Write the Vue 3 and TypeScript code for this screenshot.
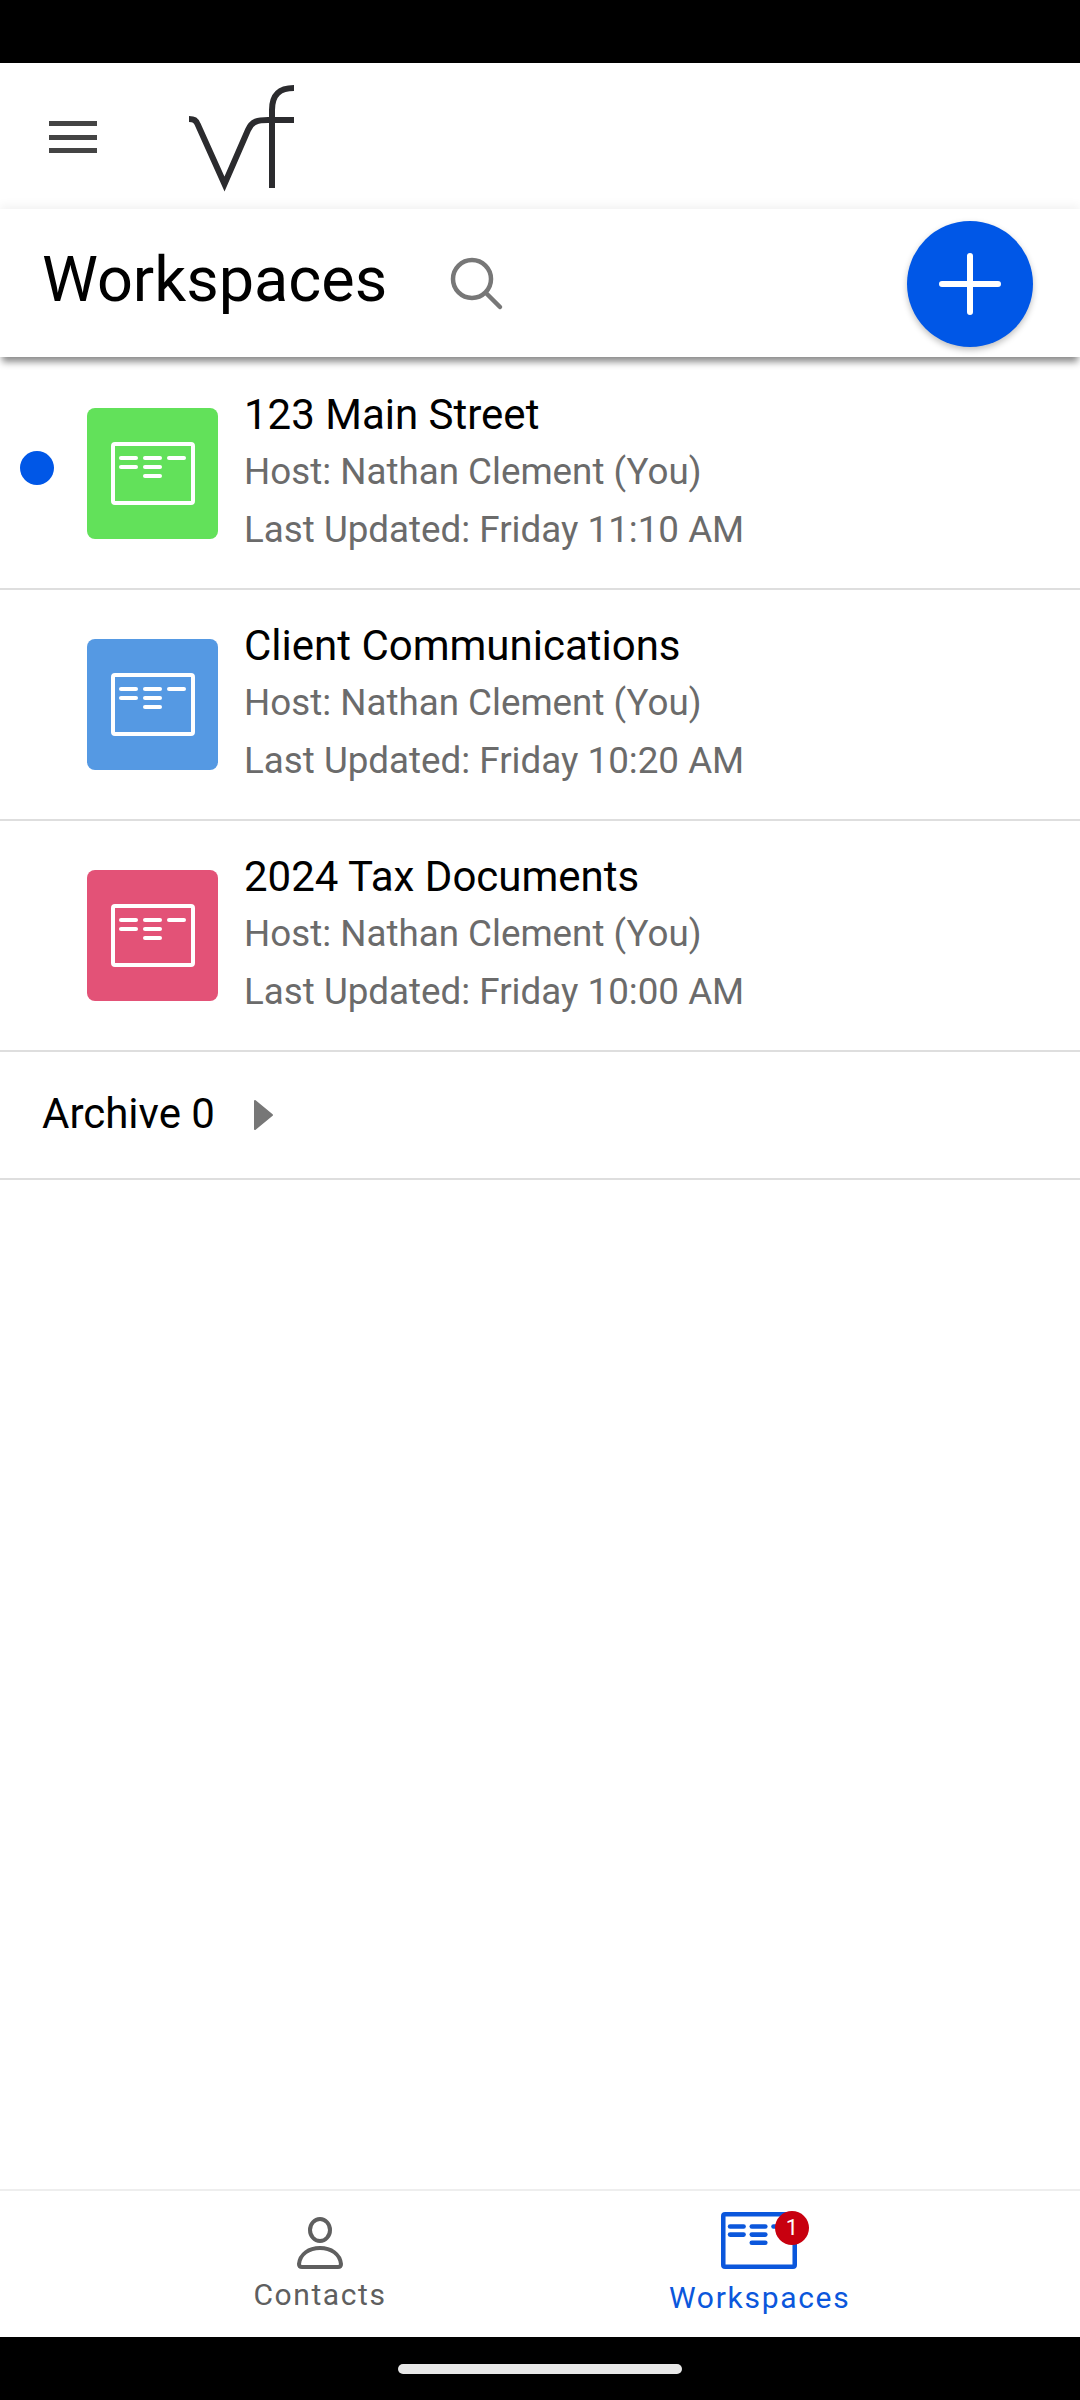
<script setup lang="ts">
interface Workspace {
  name: string
  updated: string
  color: string
  unread: boolean
}

const workspaces: Workspace[] = [
  { name: '123 Main Street', updated: 'Friday 11:10 AM', color: '#62e15a', unread: true },
  { name: 'Client Communications', updated: 'Friday 10:20 AM', color: '#5599e3', unread: false },
  { name: '2024 Tax Documents', updated: 'Friday 10:00 AM', color: '#e35277', unread: false },
]

const cardLines = [
  [10, 16, 25],
  [34, 16, 49],
  [58, 16, 73],
  [10, 25, 25],
  [34, 25, 49],
  [34, 34, 49],
]
</script>

<template>
  <div class="screen">
    <div class="status-bar"></div>

    <header class="top-bar">
      <div class="menu-icon">
        <span></span>
        <span></span>
        <span></span>
      </div>
      <svg class="logo" width="108" height="108" viewBox="0 0 108 108" fill="none" stroke="#2b2b2e" stroke-width="6">
        <path d="M1 35 C6 35 8 36 10 41 L36.5 100 L60 46 C64 37 70 36 80 36 L106 36" />
        <path d="M84 104 V26 C84 10 92 4 106 4" />
      </svg>
    </header>

    <section class="title-bar">
      <h1 class="page-title">Workspaces</h1>
      <svg class="search-icon" width="54" height="54" viewBox="0 0 54 54" fill="none" stroke="#777" stroke-width="4.5" stroke-linecap="round">
        <circle cx="22" cy="22" r="19" />
        <path d="M36 36 L50 50" />
      </svg>
      <button class="fab" type="button" aria-label="Add workspace">
        <svg width="62" height="62" viewBox="0 0 62 62" stroke="#fff" stroke-width="6" stroke-linecap="round">
          <path d="M31 3 V59 M3 31 H59" />
        </svg>
      </button>
    </section>

    <main class="content">
      <article v-for="item in workspaces" :key="item.name" class="row">
        <div class="dot-slot">
          <span v-if="item.unread" class="dot"></span>
        </div>
        <div class="tile" :style="{ background: item.color }">
          <svg width="84" height="63" viewBox="0 0 84 63" fill="none" stroke="#fff" stroke-width="4" stroke-linecap="round">
            <rect x="2" y="2" width="80" height="59" rx="2" />
            <path v-for="(l, i) in cardLines" :key="i" :d="`M${l[0]} ${l[1]} H${l[2]}`" />
          </svg>
        </div>
        <div class="info">
          <div class="name">{{ item.name }}</div>
          <div class="meta">Host: Nathan Clement (You)</div>
          <div class="meta">Last Updated: {{ item.updated }}</div>
        </div>
      </article>

      <div class="archive">
        <span>Archive 0</span>
        <svg class="caret" width="21" height="32" viewBox="0 0 21 32">
          <path d="M2 2 L19 16 L2 30 Z" fill="#777" stroke="#777" stroke-width="2" stroke-linejoin="round" />
        </svg>
      </div>
    </main>

    <footer class="tabs">
      <div class="tab">
        <div class="tab-icon">
          <svg width="50" height="54" viewBox="0 0 50 54" fill="none" stroke="#5f5f5f" stroke-width="4" stroke-linejoin="round">
            <ellipse cx="25" cy="14" rx="10" ry="11" />
            <path d="M4 48 C5 38 14 32 25 32 C36 32 45 38 46 48 C46 50 45 51 43 51 H7 C5 51 4 50 4 48 Z" />
          </svg>
        </div>
        <span class="tab-label">Contacts</span>
      </div>
      <div class="tab active">
        <div class="tab-icon">
          <svg width="76" height="57" viewBox="0 0 84 63" fill="none" stroke="#0b57dc" stroke-width="5" stroke-linecap="round">
            <rect x="2.5" y="2.5" width="79" height="58" rx="2" />
            <path v-for="(l, i) in cardLines" :key="i" :d="`M${l[0]} ${l[1]} H${l[2]}`" />
          </svg>
          <span class="badge">1</span>
        </div>
        <span class="tab-label">Workspaces</span>
      </div>
    </footer>

    <div class="nav-bar">
      <span class="home-handle"></span>
    </div>
  </div>
</template>

<style scoped>
.screen {
  width: 1080px;
  height: 2400px;
  display: flex;
  flex-direction: column;
  overflow: hidden;
  background: #fff;
  font-family: Roboto, "Liberation Sans", sans-serif;
}

.status-bar {
  height: 63px;
  flex-shrink: 0;
  background: #000;
}

.top-bar {
  height: 146px;
  flex-shrink: 0;
  display: flex;
  align-items: flex-start;
}

.menu-icon {
  width: 48px;
  margin: 58px 0 0 49px;
  display: flex;
  flex-direction: column;
  gap: 8.5px;
}

.menu-icon span {
  height: 5px;
  background: #444;
}

.logo {
  margin: 21px 0 0 91px;
}

.title-bar {
  position: relative;
  z-index: 1;
  height: 148px;
  flex-shrink: 0;
  display: flex;
  align-items: center;
  padding: 2px 47px 0 42px;
  box-sizing: border-box;
  background: #fff;
  box-shadow: 0 7px 7px -2px rgba(0, 0, 0, 0.45), 0 -3px 10px rgba(0, 0, 0, 0.06);
}

.page-title {
  margin: 0;
  font-size: 63px;
  font-weight: 400;
  color: #000;
  line-height: 1;
  position: relative;
  top: -5px;
}

.search-icon {
  margin-left: 63px;
}

.fab {
  width: 126px;
  height: 126px;
  margin-left: auto;
  padding: 0;
  border: none;
  border-radius: 50%;
  background: #0057e7;
  display: flex;
  align-items: center;
  justify-content: center;
  box-shadow: 0 3px 6px rgba(0, 0, 0, 0.25);
}

.content {
  flex: 1;
  padding-top: 2px;
}

.row {
  height: 229px;
  display: flex;
  align-items: center;
  border-bottom: 2px solid #dedede;
}

.dot-slot {
  width: 34px;
  height: 34px;
  margin: 0 33px 12px 20px;
}

.dot {
  display: block;
  width: 34px;
  height: 34px;
  border-radius: 50%;
  background: #0057e7;
}

.tile {
  width: 131px;
  height: 131px;
  border-radius: 8px;
  flex-shrink: 0;
  display: flex;
  justify-content: center;
  padding-top: 34px;
  box-sizing: border-box;
}

.info {
  margin: 0 0 3px 26px;
}

.name {
  font-size: 42px;
  line-height: 57px;
  color: #000;
}

.meta {
  font-size: 36.75px;
  line-height: 58px;
  color: #6b6b6b;
}

.archive {
  height: 128px;
  padding: 0 0 3px 42px;
  box-sizing: border-box;
  display: flex;
  align-items: center;
  gap: 38px;
  font-size: 42px;
  color: #000;
  border-bottom: 2px solid #dedede;
}

.caret {
  margin-top: 2px;
}

.tabs {
  height: 146px;
  flex-shrink: 0;
  display: flex;
  border-top: 2px solid #eee;
}

.tab {
  display: flex;
  flex-direction: column;
  align-items: center;
  color: #5f5f5f;
}

.tab:first-child {
  flex: 0 0 640px;
}

.tab:last-child {
  flex: 0 0 440px;
  align-items: flex-start;
  padding-left: 29px;
}

.tab-icon {
  position: relative;
  height: 54px;
  margin-top: 25px;
}

.tab:last-child .tab-icon {
  height: 57px;
  margin: 21px 0 0 52px;
}

.tab-label {
  margin-top: 7px;
  font-size: 30px;
  letter-spacing: 1.6px;
  line-height: 36px;
}

.tab.active .tab-label {
  margin-top: 11px;
  letter-spacing: 1.7px;
}

.tab.active {
  color: #0b57dc;
}

.badge {
  position: absolute;
  top: -1px;
  right: -12px;
  width: 34px;
  height: 34px;
  border-radius: 50%;
  background: #c8000f;
  color: #fff;
  font-size: 22px;
  line-height: 34px;
  text-align: center;
}

.nav-bar {
  height: 63px;
  flex-shrink: 0;
  background: #000;
  display: flex;
  justify-content: center;
  padding-top: 27px;
  box-sizing: border-box;
}

.home-handle {
  width: 284px;
  height: 10px;
  border-radius: 5px;
  background: #e8e8e8;
}
</style>
